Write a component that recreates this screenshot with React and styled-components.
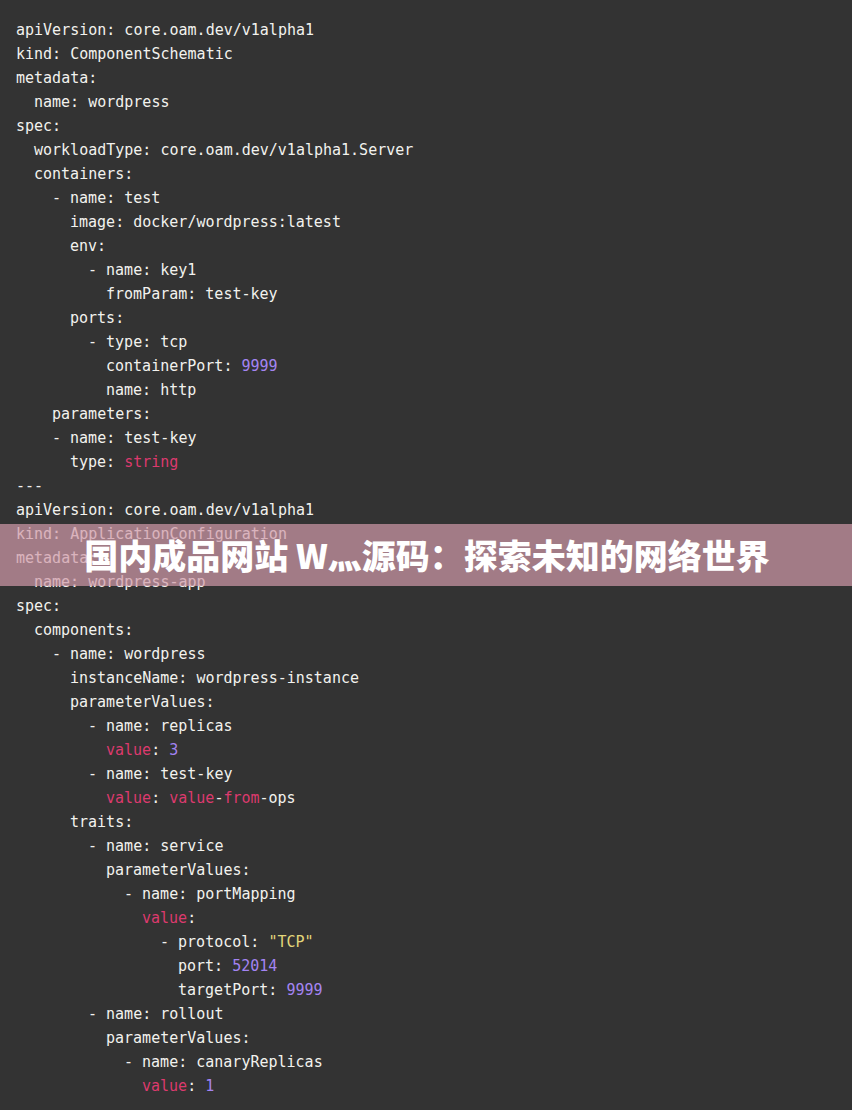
import styled, { createGlobalStyle } from 'styled-components';

const GlobalStyle = createGlobalStyle`
  html, body {
    margin: 0;
    padding: 0;
    background: #333333;
  }
`;

// each line: indent (in spaces) + segments [text, kind]
const lines = [
  [0, [['apiVersion: core.oam.dev/v1alpha1']]],
  [0, [['kind: ComponentSchematic']]],
  [0, [['metadata:']]],
  [2, [['name: wordpress']]],
  [0, [['spec:']]],
  [2, [['workloadType: core.oam.dev/v1alpha1.Server']]],
  [2, [['containers:']]],
  [4, [['- name: test']]],
  [6, [['image: docker/wordpress:latest']]],
  [6, [['env:']]],
  [8, [['- name: key1']]],
  [10, [['fromParam: test-key']]],
  [6, [['ports:']]],
  [8, [['- type: tcp']]],
  [10, [['containerPort: '], ['9999', 'num']]],
  [10, [['name: http']]],
  [4, [['parameters:']]],
  [4, [['- name: test-key']]],
  [6, [['type: '], ['string', 'kw']]],
  [0, [['---']]],
  [0, [['apiVersion: core.oam.dev/v1alpha1']]],
  [0, [['kind: ApplicationConfiguration']]],
  [0, [['metadata:']]],
  [2, [['name: wordpress-app']]],
  [0, [['spec:']]],
  [2, [['components:']]],
  [4, [['- name: wordpress']]],
  [6, [['instanceName: wordpress-instance']]],
  [6, [['parameterValues:']]],
  [8, [['- name: replicas']]],
  [10, [['value', 'kw'], [': '], ['3', 'num']]],
  [8, [['- name: test-key']]],
  [10, [['value', 'kw'], [': '], ['value', 'kw'], ['-'], ['from', 'kw'], ['-ops']]],
  [6, [['traits:']]],
  [8, [['- name: service']]],
  [10, [['parameterValues:']]],
  [12, [['- name: portMapping']]],
  [14, [['value', 'kw'], [':']]],
  [16, [['- protocol: '], ['"TCP"', 'str']]],
  [18, [['port: '], ['52014', 'num']]],
  [18, [['targetPort: '], ['9999', 'num']]],
  [8, [['- name: rollout']]],
  [10, [['parameterValues:']]],
  [12, [['- name: canaryReplicas']]],
  [14, [['value', 'kw'], [': '], ['1', 'num']]],
];

const colors = {
  kw: '#dc3a6e',
  num: '#a384f2',
  str: '#e3d77a',
};

export default function App() {
  return (
    <Page>
      <GlobalStyle />
      <Code>
        {lines.map(([indent, segs], i) => (
          <Line key={i} $indent={indent}>
            {segs.map(([text, kind], j) => (
              <Token key={j} $kind={kind}>{text}</Token>
            ))}
          </Line>
        ))}
      </Code>
      <Banner>
        <BannerTitle>国内成品网站 W灬源码：探索未知的网络世界</BannerTitle>
      </Banner>
    </Page>
  );
}

const Page = styled.div`
  position: relative;
  width: 852px;
  height: 1110px;
  background: #333333;
  overflow: hidden;
`;

const Code = styled.pre`
  margin: 0;
  padding: 18px 16px 0;
  font-family: "DejaVu Sans Mono", "Liberation Mono", monospace;
  font-size: 15px;
  line-height: 24px;
  color: #f2f2ee;
`;

const Line = styled.div`
  height: 24px;
  padding-left: ${(p) => p.$indent * 9}px;
  white-space: pre;
`;

const Token = styled.span`
  color: ${(p) => (p.$kind ? colors[p.$kind] : 'inherit')};
`;

const Banner = styled.div`
  position: absolute;
  left: 0;
  right: 0;
  top: 524px;
  height: 62px;
  display: flex;
  align-items: center;
  justify-content: center;
  background: rgba(209, 154, 169, 0.71);
`;

const BannerTitle = styled.h1`
  margin: 0;
  padding-left: 2px;
  font-family: "Noto Sans CJK SC", "Noto Sans", sans-serif;
  font-size: 34px;
  font-weight: 900;
  color: #ffffff;
  letter-spacing: 0;
  line-height: 1;
`;
